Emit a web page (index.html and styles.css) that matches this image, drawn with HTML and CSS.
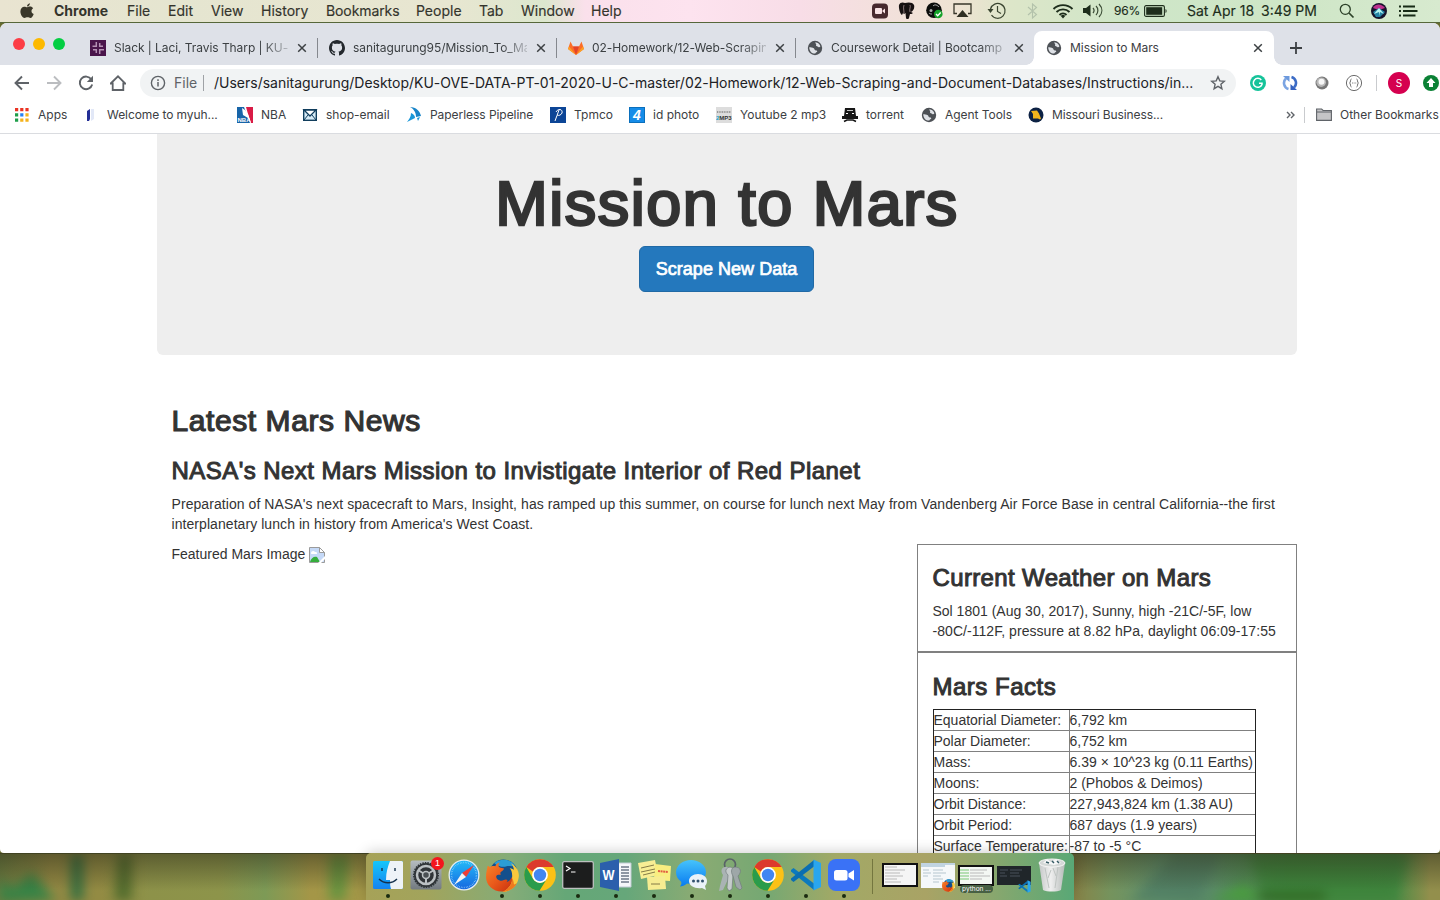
FILE: index.html
```html
<!DOCTYPE html>
<html lang="en">
<head>
<meta charset="utf-8">
<title>Mission to Mars</title>
<link rel="stylesheet" href="styles.css">
</head>
<body>
<svg class="defs" aria-hidden="true">
  <defs>
    <linearGradient id="gFinder" x1="0" y1="0" x2="0" y2="1"><stop offset="0" stop-color="#15c6fb"/><stop offset="1" stop-color="#1583ef"/></linearGradient>
    <linearGradient id="gSteel" x1="0" y1="0" x2="0" y2="1"><stop offset="0" stop-color="#b5bcc0"/><stop offset="1" stop-color="#737a80"/></linearGradient>
    <linearGradient id="gSafari" x1="0" y1="0" x2="0" y2="1"><stop offset="0" stop-color="#22b9f8"/><stop offset="1" stop-color="#1668e0"/></linearGradient>
    <linearGradient id="gFox" x1="0" y1="0" x2="1" y2="1"><stop offset="0" stop-color="#f5872a"/><stop offset=".5" stop-color="#ea5a1b"/><stop offset="1" stop-color="#c9300f"/></linearGradient>
    <linearGradient id="gMsg" x1="0" y1="0" x2="0" y2="1"><stop offset="0" stop-color="#46c3fb"/><stop offset="1" stop-color="#087bf1"/></linearGradient>
    <linearGradient id="gTrash" x1="0" y1="0" x2="1" y2="0"><stop offset="0" stop-color="#c5c8c8"/><stop offset=".45" stop-color="#efefef"/><stop offset="1" stop-color="#b7bcba"/></linearGradient>
  </defs>
  <symbol id="close" viewBox="0 0 10 10"><path d="M1.2 1.2l7.6 7.6M8.800 1.200L1.200 8.800" stroke="#3c4043" stroke-width="1.500" fill="none"/></symbol>
  <symbol id="globe" viewBox="0 0 16 16"><circle cx="8" cy="8" r="7.200" fill="#4d5156"/><path d="M8.500 2.200c2.400.2 4.300 1.900 4.900 4.100-.6 1.200-1.700 1.100-2.400.4-.6-.6-1.500-.3-1.900-1C8.700 5 9.600 4.500 9 3.800c-.4-.5-.9-.8-.5-1.600zM2.200 7.200c1.400.2 3.400.1 4.600 1.100.8.7.4 1.500 1.400 1.900 1 .3 2 .2 2.100 1.100-.4 1-1.500 1.200-2 2.300-3.200.3-6-2.400-6.100-6.400z" fill="#dee1e6"/></symbol>
  <symbol id="chrome" viewBox="0 0 32 32"><circle cx="16" cy="16" r="15.800" fill="#fbc116"/><path d="M2.300 8.100A15.800 15.800 0 0 1 29.700 8.100H16a8 8 0 0 0-7.200 4.500z" fill="#dc3a2d"/><path d="M2.300 8.100A15.800 15.800 0 0 0 15.500 31.800L22.800 20a8 8 0 0 1-13.700 0z" fill="#2a9c4b"/><circle cx="16" cy="16" r="7.900" fill="#fff"/><circle cx="16" cy="16" r="6.200" fill="#4286f1"/></symbol>
  <symbol id="firefox" viewBox="0 0 32 32"><circle cx="17" cy="14" r="13.500" fill="#134f8c"/><path d="M8 4c6-5 16-4 20 2-3 2-5 0-8 1s-7 1-12-3z" fill="#2b9dd6"/><path d="M24 4c6 3 9 9 7.500 15C30 27 23 32 16 32c2-2 8-5 9-12 1-5 0-9-2-11 2 0 4 1 4 2 0-3-1-5-3-7z" fill="#fbc93c"/><path d="M1.500 7c1-.500 1.500.5 2 1C5 7 7 6.500 9 7c1-2 2-3 4.500-3.500C12 5 11.500 7 13 8c1 1 4 .5 4.500 1.500-.5 2-3 2.500-3.500 3.500-.3 1.500.5 2 0 2.500-1-.500-3.500-.5-4 1-.500 2 1 4 4 4.500 3 .4 4-1.500 6-1 1.500.5 1 1.500 0 2 2 0 4-2 5-4.500C26 23 23 28 17 31.500 8 32.500 0 26 0 17.500 0 13 1 10 1.500 7z" fill="url(#gFox)"/><path d="M25 18c1 6-3 11-9 14 7-.5 12-4 14-9-2 2-3 2-3 1 0-2-1-4-2-6z" fill="#ee7a1e"/></symbol>
  <symbol id="vscode" viewBox="0 0 32 32"><path d="M1 11l2.500-2L24 24.500V31L1 12.500z" fill="#0c79bd"/><path d="M1 21l2.500 2L24 7.500V1L1 19.500z" fill="#0b6eb1"/><path d="M23.500.5L31 4v24l-7.500 3.500z" fill="#2aa6ee"/></symbol>
</svg>

<header class="menubar">
  <svg class="apple" width="14" height="16" viewBox="0 0 14 16"><path d="M9.900.2c.1 1.500-1.300 3.300-2.900 3.300C6.800 2 8.300.4 9.900.2zM7.200 4.300c.7 0 1.600-.7 3-.7 1.100 0 2.200.6 2.900 1.600-2.400 1.500-2 4.800.6 5.800-.7 1.900-1.900 4-3.300 4-1.100 0-1.500-.7-2.900-.7s-1.900.7-2.900.7C2.600 15 .4 11.500.4 8.500c0-3.100 2-4.800 3.900-4.800 1.200 0 2.200.6 2.900.6z" fill="#39372a"/></svg>
  <span class="m-chrome">Chrome</span><span class="m-file">File</span><span class="m-edit">Edit</span><span class="m-view">View</span><span class="m-history">History</span><span class="m-book">Bookmarks</span><span class="m-people">People</span><span class="m-tab">Tab</span><span class="m-window">Window</span><span class="m-help">Help</span>
  <div class="status">
    <svg class="s-zoom" width="16" height="16" viewBox="0 0 16 16"><rect width="16" height="15" y=".5" rx="4" fill="#47292e"/><rect x="3" y="5" width="7" height="6" rx="1" fill="#f8e2e4"/><path d="M10.500 7.500L13 5.500v5l-2.500-2z" fill="#f8e2e4"/></svg>
    <svg class="s-pg" width="17" height="17" viewBox="0 0 17 17"><path d="M1 3C2 0 5 0 7 1c3-1 8-1 9 2s-1 6-3 7l2 1c-1 1-2 1-3 1l-1 4c-1 2-3 1-3 0l-.500-5-1.500 1-1-1-1 2C2 12 .5 6 1 3z" fill="#171112"/><path d="M6 3c-1 3 0 5 0 8M12 3c1 2-1 4 0 7" stroke="#b79fa1" stroke-width=".7" fill="none"/></svg>
    <svg class="s-web" width="17" height="17" viewBox="0 0 17 17"><circle cx="8" cy="8.300" r="7.800" fill="#0c0e0c"/><path d="M7 4c2-2 4-1 6 1M3 11c1 1 2 1 3 1" stroke="#ddd" stroke-width=".8" fill="none"/><circle cx="5" cy="8.500" r="1.500" fill="#aaa"/><circle cx="12.300" cy="12" r="4.300" fill="#16a32a"/><path d="M10 12l1.700 1.700 3-3.200" stroke="#fff" stroke-width="1.300" fill="none"/></svg>
    <svg class="s-air" width="19" height="15" viewBox="0 0 19 15"><path d="M4 10.500H1V1h17v9.500h-3" stroke="#39372a" stroke-width="1.300" fill="none"/><path d="M9.500 7l6 7h-12z" fill="#302f22"/></svg>
    <svg class="s-time" width="20" height="18" viewBox="0 0 20 18"><path d="M3.500 7A7.400 7.400 0 1 1 4.500 13M10.500 4v5.500l3.500 2" stroke="#39442f" stroke-width="1.200" fill="none"/><path d="M.5 7h6L3.500 11z" fill="#39442f"/></svg>
    <svg class="s-bt" width="11" height="16" viewBox="0 0 11 16"><path d="M1 4l8.500 7.500L5.500 15V1l4 3.500L1 12" stroke="#b3c2ab" stroke-width="1.100" fill="none"/></svg>
    <svg class="s-wifi" width="22" height="16" viewBox="0 0 22 16"><path d="M1.500 6a13.500 13.500 0 0 1 19 0M4.500 9a9.300 9.300 0 0 1 13 0M7.500 12a5 5 0 0 1 7 0" stroke="#1d2d1b" stroke-width="1.900" fill="none"/><path d="M8.800 13a3 3 0 0 1 4.400 0L11 15.500z" fill="#1d2d1b"/></svg>
    <svg class="s-vol" width="22" height="15" viewBox="0 0 22 15"><path d="M1 5h3L8.500 1.500v12L4 10H1z" fill="#1d2d1b"/><path d="M11 5c1.300 1.500 1.300 3.500 0 5M14 3c2.500 2.500 2.500 6.500 0 9M17 1c3.800 4 3.800 9 0 13" stroke="#3a4b35" stroke-width="1.200" fill="none"/></svg>
    <span class="s-pct">96%</span>
    <svg class="s-bat" width="24" height="12" viewBox="0 0 24 12"><rect x=".6" y=".6" width="19.800" height="10.800" rx="1.500" stroke="#1d2d1b" stroke-width="1.100" fill="none"/><rect x="2.200" y="2.200" width="16" height="7.600" fill="#1d2d1b"/><path d="M21.500 4c1.500.5 1.500 3.500 0 4z" fill="#1d2d1b"/></svg>
    <span class="s-date">Sat Apr 18</span><span class="s-clock">3:49 PM</span>
    <svg class="s-search" width="16" height="16" viewBox="0 0 16 16"><circle cx="6.300" cy="6.300" r="5" stroke="#2d4129" stroke-width="1.300" fill="none"/><path d="M10 10l4.500 4.500" stroke="#2d4129" stroke-width="1.700"/></svg>
    <svg class="s-siri" width="16" height="16" viewBox="0 0 16 16"><circle cx="8" cy="8" r="8" fill="#15122b"/><path d="M2 5c3-5 9-4 12 0L8 7z" fill="#bd318e"/><path d="M2 9l6-4 6 4-5 5H5z" fill="#2583a5"/><path d="M3 11l5-6 5 6-4-2v4l-1-4z" fill="#b8f6f0"/></svg>
    <svg class="s-list" width="19" height="12" viewBox="0 0 19 12"><path d="M0 1.500h2M4 1.500h12M0 6h2M4 6h14.500M0 10.500h2M4 10.500h12.500" stroke="#172b16" stroke-width="1.800"/></svg>
  </div>
</header>

<div class="window">
  <div class="tabs">
    <div class="lights"><i class="red"></i><i class="amber"></i><i class="green"></i></div>
    <div class="tab t1">
      <svg width="16" height="16" viewBox="0 0 16 16"><rect width="16" height="16" fill="#4a154b"/><path d="M6.300 2v5M9.700 3v4M6.300 9v4M9.700 9v5M2.500 6.300H7M9 6.300h4M3 9.700h4M9 9.700h5" stroke="#b591b4" stroke-width="1.500"/></svg>
      <span class="tt">Slack | Laci, Travis Tharp | KU-</span><svg class="x" width="10" height="10"><use href="#close"/></svg>
    </div>
    <div class="tab t2">
      <svg width="16" height="16" viewBox="0 0 16 16"><path fill="#24292e" d="M8 0C3.600 0 0 3.600 0 8c0 3.500 2.300 6.500 5.500 7.600.4.100.5-.2.500-.4v-1.500c-2.200.5-2.700-.9-2.700-.9-.4-.9-.9-1.200-.9-1.200-.7-.5.100-.5.100-.5.800.1 1.200.8 1.200.8.700 1.200 1.900.9 2.300.7.100-.5.300-.9.500-1.100-1.800-.2-3.600-.9-3.600-4 0-.9.300-1.600.8-2.200-.1-.2-.4-1 .1-2.100 0 0 .7-.2 2.200.8 1.300-.4 2.700-.4 4 0 1.500-1 2.200-.8 2.200-.8.400 1.100.2 1.900.1 2.100.5.600.8 1.300.8 2.200 0 3.100-1.900 3.800-3.700 4 .3.300.6.800.6 1.500v2.200c0 .2.100.5.500.4C13.700 14.500 16 11.500 16 8c0-4.400-3.600-8-8-8z"/></svg>
      <span class="tt">sanitagurung95/Mission_To_Ma</span><svg class="x" width="10" height="10"><use href="#close"/></svg>
    </div>
    <div class="tab t3">
      <svg width="16" height="16" viewBox="0 0 16 16"><path d="M8 15L0 9l2.500-7.500L5 6.500h6l2.500-5L16 9z" fill="#fc6d26"/><path d="M8 15L5 6.500h6z" fill="#e24329"/><path d="M8 15L0 9l1-2.500zM8 15l8-6-1-2.500z" fill="#fca326"/></svg>
      <span class="tt">02-Homework/12-Web-Scrapin</span><svg class="x" width="10" height="10"><use href="#close"/></svg>
    </div>
    <div class="tab t4">
      <svg width="16" height="16"><use href="#globe"/></svg>
      <span class="tt">Coursework Detail | Bootcamp</span><svg class="x" width="10" height="10"><use href="#close"/></svg>
    </div>
    <div class="tab t5 active">
      <svg width="16" height="16"><use href="#globe"/></svg>
      <span class="tt">Mission to Mars</span><svg class="x" width="10" height="10"><use href="#close"/></svg>
    </div>
    <svg class="plus" width="12" height="12" viewBox="0 0 12 12"><path d="M6 0v12M0 6h12" stroke="#3c4043" stroke-width="1.800"/></svg>
  </div>

  <div class="toolbar">
    <svg class="nav" width="16" height="16" viewBox="0 0 16 16"><path d="M15 8H2M8 1.500L1.500 8 8 14.500" stroke="#5f6368" stroke-width="1.900" fill="none"/></svg>
    <svg class="nav" width="16" height="16" viewBox="0 0 16 16"><path d="M1 8h13M8 1.500L14.500 8 8 14.500" stroke="#bbbdc0" stroke-width="1.900" fill="none"/></svg>
    <svg class="nav" width="16" height="16" viewBox="0 0 16 16"><path d="M13.300 4.300A6.300 6.300 0 1 0 14.200 9.500" stroke="#5f6368" stroke-width="1.900" fill="none"/><path d="M15 .8V7H8.800z" fill="#5f6368"/></svg>
    <svg class="nav" width="16" height="16" viewBox="0 0 16 16"><path d="M.7 8.500L8 1.300l7.300 7.200h-2V15H2.700V8.500z" stroke="#5f6368" stroke-width="1.800" fill="none"/></svg>
    <div class="omnibox">
      <svg class="info" width="16" height="16" viewBox="0 0 16 16"><circle cx="8" cy="8" r="6.600" stroke="#5f6368" stroke-width="1.400" fill="none"/><path d="M8 7v4.500M8 4.300V6" stroke="#5f6368" stroke-width="1.500"/></svg>
      <span class="scheme">File</span>
      <span class="url">/Users/sanitagurung/Desktop/KU-OVE-DATA-PT-01-2020-U-C-master/02-Homework/12-Web-Scraping-and-Document-Databases/Instructions/in...</span>
      <svg class="star" width="16" height="16" viewBox="0 0 16 16"><path d="M8 1.700l1.800 4.200 4.500.4-3.400 3 1 4.400L8 11.400l-3.900 2.300 1-4.400-3.400-3 4.500-.4z" stroke="#5f6368" stroke-width="1.400" fill="none"/></svg>
    </div>
    <svg class="ext e1" width="16" height="16" viewBox="0 0 16 16"><circle cx="8" cy="8" r="8" fill="#15c39a"/><path d="M11.300 5A4.500 4.500 0 1 0 12 9.500V8.300H9" stroke="#fff" stroke-width="1.500" fill="none"/></svg>
    <svg class="ext e2" width="16" height="16" viewBox="0 0 16 16"><path d="M6.500 14A6.200 6.200 0 0 1 4 3.500" stroke="#7ba4e2" stroke-width="2.600" fill="none"/><path d="M9.500 2a6.200 6.200 0 0 1 2.500 10.500" stroke="#3c6cc6" stroke-width="2.600" fill="none"/><path d="M1 1h6.500v6z" fill="#6c99dd"/><path d="M15 15H8.500V9z" fill="#3562c0"/></svg>
    <svg class="ext e3" width="14" height="14" viewBox="0 0 14 14"><circle cx="7" cy="7" r="6.500" fill="#777"/><circle cx="6.200" cy="6.200" r="4.800" fill="#b8b8b8"/><circle cx="6.500" cy="5.800" r="3" fill="#f7f7f7"/></svg>
    <svg class="ext e4" width="18" height="18" viewBox="0 0 18 18"><circle cx="9" cy="9" r="7.600" stroke="#6d6d6d" fill="none"/><path d="M6.500 5C5 5 6 8.500 4.500 9 6 9.500 5 13 6.500 13M11.500 5c1.500 0 .5 3.500 2 4-1.500.5-.5 4-2 4M7 9h.8M8.700 9h.8M10.400 9h.8" stroke="#6d6d6d" fill="none"/></svg>
    <i class="sep"></i>
    <span class="avatar">S</span>
    <svg class="ext e5" width="16" height="16" viewBox="0 0 16 16"><circle cx="8" cy="8" r="8" fill="#0b8135"/><path d="M8 3l4.500 5H10v4H6V8H3.500z" fill="#fff"/></svg>
  </div>

  <div class="bookmarks">
    <svg class="apps" width="14" height="14" viewBox="0 0 14 14"><path d="M0 1.700h3.200M5.200 1.700h3.200M10.400 1.700h3.200" stroke="#ea3323" stroke-width="3.200"/><path d="M0 6.900h3.200M0 12.100h3.200" stroke="#1e9e4a" stroke-width="3.200"/><path d="M5.200 6.900h3.200" stroke="#2681f2" stroke-width="3.200"/><path d="M10.400 6.900h3.200M5.200 12.100h3.200M10.400 12.100h3.200" stroke="#f5b21b" stroke-width="3.200"/></svg><span class="b1">Apps</span>
    <svg class="bi" width="16" height="16" viewBox="0 0 16 16"><path d="M6 2v10l-1 2H3V4z" fill="#232e96"/><path d="M7 2h3v10l-3 2z" fill="#e2e8f7"/></svg><span class="b2">Welcome to myuh...</span>
    <svg class="bi" width="16" height="16" viewBox="0 0 16 16"><path d="M0 0h7l6 16H0z" fill="#1764a8"/><path d="M9 0h7v16h-2L11 7z" fill="#d91b46"/><path d="M5 1l3 2 3 4 3 9-3-5-5-3z" fill="#fff"/><text x=".5" y="14.500" class="nba">NBA</text></svg><span class="b3">NBA</span>
    <svg class="bi" width="16" height="16" viewBox="0 0 16 16"><rect x="1.700" y="2.700" width="12.600" height="10.600" fill="#d7ebf6" stroke="#113e5d" stroke-width="1.400"/><path d="M2 3l6 6 6-6z" fill="#fff" stroke="#113e5d" stroke-width="1.300"/><path d="M2 13l4-5M14 13l-4-5" stroke="#113e5d"/></svg><span class="b4">shop-email</span>
    <svg class="bi" width="16" height="16" viewBox="0 0 16 16"><path d="M4 0c6 0 10 4 11 9l-5 1C10 6 8 2 4 0z" fill="#1985c8"/><path d="M5 6c3 1 4 3 4 5l-8 4c2-3 4-5 4-9zM11 11l3-1-2 4z" fill="#1997d8"/></svg><span class="b5">Paperless Pipeline</span>
    <svg class="bi" width="16" height="16" viewBox="0 0 16 16"><rect width="16" height="16" fill="#0c4596"/><path d="M5 14C6 10 8 7 9 3M6 5c2-4 7-3 6 1-1 2-3 3-5 2" stroke="#fff" fill="none"/></svg><span class="b6">Tpmco</span>
    <svg class="bi" width="16" height="16" viewBox="0 0 16 16"><rect x=".5" y=".5" width="15" height="15" fill="#158ce8" stroke="#0a6fbc"/><text x="4" y="13" class="four">4</text></svg><span class="b7">id photo</span>
    <svg class="bi" width="16" height="16" viewBox="0 0 16 16"><rect width="16" height="16" fill="#ddd"/><path d="M1 5h14" stroke="#999" stroke-width="2" stroke-dasharray="1 .7"/><text x="0" y="12.500" class="mp3"><tspan class="two">2</tspan>MP3</text></svg><span class="b8">Youtube 2 mp3</span>
    <svg class="bi" width="16" height="16" viewBox="0 0 16 16"><path d="M3 1h10l1 8H2zM0 9h16v3H0z" fill="#171717"/><path d="M4 6h2v1H4zM10 6h2v1h-2zM5 3h6v.7H5z" fill="#fff"/><path d="M2 14.500l3-1.500h6l3 1.500" stroke="#171717" stroke-width="1.600" fill="none"/></svg><span class="b9">torrent</span>
    <svg class="bi" width="16" height="16"><use href="#globe"/></svg><span class="b10">Agent Tools</span>
    <svg class="bi" width="16" height="16" viewBox="0 0 16 16"><circle cx="8" cy="8" r="7.500" fill="#0d2244"/><path d="M3 4l6-.5 2 3 2 5-1 1-2-1H5V7z" fill="#f2b51d"/></svg><span class="b11">Missouri Business...</span>
    <svg class="more" width="9" height="8" viewBox="0 0 9 8"><path d="M1 1l3 3-3 3M5 1l3 3-3 3" stroke="#5f6368" stroke-width="1.400" fill="none"/></svg>
    <i class="sep2"></i>
    <svg class="folder" width="16" height="13" viewBox="0 0 16 13"><path d="M.6 12.400V1h5l1.500 1.500h8.300v9.900z" fill="#c5c5c7" stroke="#5f6368" stroke-width="1.100"/><path d="M1 4h14" stroke="#5f6368"/></svg><span class="b12">Other Bookmarks</span>
  </div>

  <main class="page">
    <div class="container">
      <section class="jumbotron">
        <h1>Mission to Mars</h1>
        <button class="scrape">Scrape New Data</button>
      </section>
      <section class="news">
        <h2>Latest Mars News</h2>
        <h3 class="headline">NASA's Next Mars Mission to Invistigate Interior of Red Planet</h3>
        <p><span class="l1">Preparation of NASA's next spacecraft to Mars, Insight, has ramped up this summer, on course for lunch next May from Vandenberg Air Force Base in central California--the first</span><br><span class="l2">interplanetary lunch in history from America's West Coast.</span></p>
      </section>
      <div class="row">
        <div class="featured"><span>Featured Mars Image</span>
          <svg width="16" height="16" viewBox="0 0 16 16"><path d="M.5.500h10l5 5v10H.5z" fill="#c5d9f7" stroke="#9b9b9b"/><path d="M2 6c0-2 3-3 4-1 2-.5 3 2 1 2H3c-1 0-1-.5-1-1z" fill="#fff"/><path d="M1 15c1-4 4-6 7-5l3 5z" fill="#35ad3d"/><path d="M16 9v3l-4 4H9z" fill="#fff"/><path d="M10.500.5v5h5z" fill="#fff" stroke="#9b9b9b"/></svg>
        </div>
        <div class="side">
          <section class="box">
            <h3 class="weather">Current Weather on Mars</h3>
            <p><span class="l3">Sol 1801 (Aug 30, 2017), Sunny, high -21C/-5F, low</span><br><span class="l4">-80C/-112F, pressure at 8.82 hPa, daylight 06:09-17:55</span></p>
          </section>
          <section class="box">
            <h3 class="facts">Mars Facts</h3>
            <table>
              <tr><td>Equatorial Diameter:</td><td>6,792 km</td></tr>
              <tr><td>Polar Diameter:</td><td>6,752 km</td></tr>
              <tr><td>Mass:</td><td>6.39 × 10^23 kg (0.11 Earths)</td></tr>
              <tr><td>Moons:</td><td>2 (Phobos &amp; Deimos)</td></tr>
              <tr><td>Orbit Distance:</td><td>227,943,824 km (1.38 AU)</td></tr>
              <tr><td>Orbit Period:</td><td>687 days (1.9 years)</td></tr>
              <tr><td>Surface Temperature:</td><td>-87 to -5 °C</td></tr>
            </table>
          </section>
        </div>
      </div>
    </div>
  </main>
</div>

<footer class="desktop">
  <div class="wallpaper">
    <svg width="1440" height="47" viewBox="0 0 1440 47" preserveAspectRatio="none"><path d="M0 47V25l12 10 20-17 24 29z" fill="#238246"/><path d="M71 0h12v47H71z" fill="#17663f"/><path d="M118 0h14v47h-18z" fill="#426327"/><path d="M329 0h21l-5 47h-16z" fill="#58923d"/><path d="M1175 0h45l-20 47h-70z" fill="#4f7c62"/><path d="M1250 0h160l-15 47H1265z" fill="#3b833a"/><path d="M1210 47l35-18 15 18z" fill="#47a038"/><path d="M1255 38h70v12h-60z" fill="#285b18"/></svg>
  </div>
  <div class="dock">
    <div class="app run"><svg width="30" height="30" viewBox="0 0 30 30"><rect width="30" height="28" y="1" rx="1.500" fill="url(#gFinder)"/><path d="M17 1h11.500q1.500 0 1.500 1.500v25q0 1.500-1.500 1.500H18c-1-3-1-6-1-9h-4C13 12 15 6 17 1z" fill="#eef3f8"/><path d="M9 8v3M22 8v3M6 19c5 5 13 5 18 0" stroke="#15304b" stroke-width="1.400" fill="none"/></svg></div>
    <div class="app"><svg width="32" height="32" viewBox="0 0 32 32"><rect x=".5" y="1.500" width="31" height="29" rx="2" fill="url(#gSteel)"/><circle cx="16" cy="16" r="12" fill="#303438" stroke="#30363a" stroke-width="2" stroke-dasharray="1.500 1"/><circle cx="16" cy="16" r="9" fill="none" stroke="#bbc0c3" stroke-width="2.500"/><path d="M16 16L8 11M16 16l8-5M16 16v9" stroke="#bbc0c3" stroke-width="2"/><circle cx="16" cy="16" r="3.500" fill="#4a4f53" stroke="#bbc0c3" stroke-width="1.500"/></svg><b class="badge">1</b></div>
    <div class="app"><svg width="32" height="32" viewBox="0 0 32 32"><circle cx="16" cy="16" r="15.500" fill="#e4edf1"/><circle cx="16" cy="16" r="14.200" fill="url(#gSafari)"/><circle cx="16" cy="16" r="12.500" fill="none" stroke="#a5dcfa" stroke-width="1.500" stroke-dasharray=".5 1.200"/><path d="M26 6L18 18l-4-4z" fill="#ee3e37"/><path d="M6 26l8-12 4 4z" fill="#f4f4f4"/></svg></div>
    <div class="app run"><svg width="33" height="33"><use href="#firefox"/></svg></div>
    <div class="app run"><svg width="32" height="32"><use href="#chrome"/></svg></div>
    <div class="app run"><svg width="32" height="28" viewBox="0 0 32 28"><rect x=".7" y=".7" width="30.600" height="26.600" rx="1.500" fill="#1c1d1d" stroke="#bcc0bf" stroke-width="1.300"/><path d="M4 5l4 2.500L4 10M9 11h4.500" stroke="#fff" stroke-width="1.200" fill="none"/></svg></div>
    <div class="app run"><svg width="32" height="32" viewBox="0 0 32 32"><path d="M17 4h14v24H17z" fill="#f6f7fa" stroke="#c1cbd4"/><path d="M21 8h8M21 11h8M21 14h8M21 17h8M21 20h8M21 23h8" stroke="#29394f" stroke-width="1.200"/><path d="M0 4l19-4v32L0 28z" fill="#2b5fac"/><text x="2.500" y="21" class="word" textLength="12" lengthAdjust="spacingAndGlyphs">W</text></svg></div>
    <div class="app run"><svg width="35" height="32" viewBox="0 0 35 32"><path d="M1 4l17-3 3 15-17 4z" fill="#f7ee94"/><path d="M18 5l16 2-1 15-16-1z" fill="#f8ee80"/><path d="M10 18l18-1 1 13-18 1z" fill="#f6ec91"/><path d="M4 9l13-3M4 13l14-3M6 16l12-3M14 25h9" stroke="#776e3e" stroke-width=".9"/><path d="M21 12l10 1" stroke="#e15c42" stroke-width="2" stroke-dasharray="2 .6"/></svg></div>
    <div class="app run"><svg width="32" height="32" viewBox="0 0 32 32"><path d="M15 1c8 0 15 5 15 12s-7 12-15 12l-4-.500c-2 2-5 3-7 3 1-1.500 2-3 1-5-3-2-5-5-5-9C0 6 7 1 15 1z" fill="url(#gMsg)"/><path d="M22 15c5 0 9 3 9 7 0 2-1 4-2 5l1 4-4-2c-7 1-13-2-13-7 0-4 4-7 9-7z" fill="#eaf2f8"/><circle cx="17.500" cy="22" r="1.500" fill="#31516e"/><circle cx="22" cy="22" r="1.500" fill="#31516e"/><circle cx="26.500" cy="22" r="1.500" fill="#31516e"/></svg></div>
    <div class="app run"><svg width="28" height="34" viewBox="0 0 28 34"><circle cx="14" cy="6.500" r="5.500" fill="none" stroke="#596267" stroke-width="1.700"/><path d="M9 9c5-1 8 4 5 8l-7 15-4 1 1-5 3-11c-3-4-1-8 2-8z" fill="#aab3b4"/><path d="M14 9c5 1 5 5 3 8l-1 14-3 2-2-3 1-13c-4-4-2-7 2-8z" fill="#c5cbcb" stroke="#737d7e" stroke-width=".7"/><path d="M19 9c6 0 7 5 3 9l4 12-2 2-4-3-3-11c-3-5-1-9 2-9z" fill="#9ea7a8" stroke="#737d7e" stroke-width=".7"/></svg></div>
    <div class="app run"><svg width="32" height="32"><use href="#chrome"/></svg></div>
    <div class="app run"><svg width="32" height="32"><use href="#vscode"/></svg></div>
    <div class="app run"><svg width="32" height="32" viewBox="0 0 32 32"><rect width="32" height="32" rx="8" fill="#3a72f6"/><rect x="6" y="11" width="13.500" height="10.500" rx="2.500" fill="#fff"/><path d="M20.500 14.500L26 11v10.500L20.500 18z" fill="#fff"/></svg></div>
    <i class="rule"></i>
    <div class="app"><svg width="36" height="24" viewBox="0 0 36 24"><rect x="1" y="1" width="34" height="22" fill="#f5f5f5" stroke="#111" stroke-width="2"/><path d="M3 4h12M3 7h20M3 10h15M3 13h18M3 16h12M3 19h16" stroke="#aaa" stroke-width=".8"/></svg></div>
    <div class="app"><svg width="34" height="25" viewBox="0 0 34 25"><rect width="34" height="25" fill="#f5f8fa"/><path d="M0 1h34M0 3h24" stroke="#8cb0c9"/><path d="M2 7h6M2 10h8M2 13h5M12 7h10M12 10h13M12 13h8M12 16h10M12 19h6" stroke="#b6c6cf"/></svg><svg class="mini" width="13" height="13"><use href="#firefox"/></svg></div>
    <div class="app"><svg width="36" height="21" viewBox="0 0 36 21"><rect x="1" y="1" width="34" height="19" fill="#f3f7f3" stroke="#111" stroke-width="2"/><path d="M2 5h9M2 8h9M2 11h9M2 14h9" stroke="#b6dfb4" stroke-width="2"/><path d="M12 5h17M12 8h14M12 11h20M12 14h12" stroke="#aaa" stroke-width=".8"/></svg><span class="tip">python ...</span></div>
    <div class="app"><svg width="34" height="19" viewBox="0 0 34 19"><rect width="34" height="19" fill="#20262a"/><path d="M3 4h8M3 7h5M13 4h12M13 7h9M13 10h10M3 10h7" stroke="#49515a"/></svg><svg class="mini code" width="13" height="13"><use href="#vscode"/></svg></div>
    <div class="app"><svg width="28" height="34" viewBox="0 0 28 34"><path d="M1 5h26l-4 27c-4 2-14 2-18 0z" fill="url(#gTrash)"/><ellipse cx="14" cy="5" rx="13" ry="4" fill="#d4d8d7" stroke="#f5f5f5"/><path d="M5 5l4-4 4 3 5-3 5 4-7 2z" fill="#f8f8f8"/><path d="M8 4l3 1M14 3l2 2M19 3l2 2" stroke="#355b65" stroke-width="1.500"/><path d="M7 10l4 20M13 12l-3 8M20 9l-3 21M15 10l3 8" stroke="#bfc4c2"/></svg></div>
  </div>
</footer>
</body>
</html>
```

FILE: styles.css
```css
* { box-sizing: border-box; }
body { margin: 0; width: 1440px; height: 900px; overflow: hidden; display: flex; flex-direction: column; font-family: "Liberation Sans", Arial, sans-serif; background: #666a2f; }
svg, i { display: block; flex: none; }
.defs { position: absolute; width: 0; height: 0; }

/* system menu bar */
.menubar { flex: none; height: 23px; display: flex; align-items: center; padding: 0 0 1px 20px; border-bottom: 1px solid #56673a; background: linear-gradient(90deg, #e9e4d1 0, #e5e5d0 170px, #e8e6d1 450px, #dce7ce 545px, #fae0eb 585px, #fde3ef 690px, #f8dde7 800px, #eee3d2 960px, #dde6c9 1010px, #cee6c8 1130px, #cfe6c7 1300px, #d7eacf 1440px); font: 400 14px/22px Inter, sans-serif; color: #34342c; white-space: nowrap; }
.menubar span { flex: none; -webkit-text-stroke: .15px currentColor; }
.menubar .apple { margin-right: 20px; }
.menubar .m-chrome { width: 73px; font-weight: 700; -webkit-text-stroke: 0; }
.m-file { width: 41px; }
.m-edit { width: 43px; }
.m-view { width: 50px; }
.m-history { width: 65px; }
.m-book { width: 90px; letter-spacing: -.1px; }
.m-people { width: 63px; }
.m-tab { width: 42px; }
.m-window { width: 70px; }
.m-help { width: 281px; }
.status { display: flex; align-items: center; color: #1d2d1b; }
.s-zoom { margin-right: 10px; }
.s-pg { margin-right: 11px; }
.s-web { margin-right: 10px; }
.s-air { margin-right: 15px; }
.s-time { margin-right: 20px; }
.s-bt { margin-right: 14px; }
.s-wifi { margin-right: 8px; }
.s-vol { margin-right: 10px; }
.menubar .s-pct { width: 30px; font-size: 12px; letter-spacing: -.2px; }
.s-bat { margin-right: 19px; }
.s-date { width: 74px; }
.s-clock { width: 78px; }
.s-search { margin-right: 16px; }
.s-siri { margin-right: 12px; }

/* browser window */
.window { flex: none; height: 830px; border-radius: 7px 7px 4px 4px; overflow: hidden; background: #fff; display: flex; flex-direction: column; font-family: Inter, sans-serif; }
.tabs { height: 42px; flex: none; display: flex; align-items: center; background: #dee1e8; padding-left: 13px; }
.lights { display: flex; gap: 8px; width: 77px; align-self: flex-start; padding-top: 15px; }
.lights i { width: 12px; height: 12px; border-radius: 50%; }
.red { background: #fc3d46; }
.amber { background: #fdb900; }
.green { background: #04ce42; }
.tab { display: flex; align-items: center; height: 34px; margin-top: 8px; font: 400 12px/18px Inter, sans-serif; color: #3c4043; }
.tab > svg:first-child { margin-right: 8px; }
.tab .tt { white-space: nowrap; width: 174px; margin-right: 9px; letter-spacing: -.06px; }
.tab:not(.active) .tt { -webkit-mask-image: linear-gradient(90deg, #000 148px, transparent 182px); }
.t1::after, .t2::after, .t3::after { content: ""; height: 20px; width: 1px; background: #85888e; margin-left: 10px; }
.t1, .t2, .t3 { width: 228px; margin-right: 11px; }
.t4 { width: 227px; }
.t5 { width: 240px; background: #fff; border-radius: 8px 8px 0 0; padding-left: 12px; position: relative; }
.t5::before, .t5::after { content: ""; position: absolute; bottom: 0; width: 8px; height: 8px; }
.t5::before { left: -8px; background: radial-gradient(circle at 0 0, #dee1e8 7.500px, #fff 8px); }
.t5::after { right: -8px; background: radial-gradient(circle at 100% 0, #dee1e8 7.500px, #fff 8px); }
.t5 .tt { width: 183px; margin-right: 0; }
.plus { margin: 8px 0 0 16px; }

.toolbar { height: 36px; flex: none; display: flex; align-items: center; padding-left: 14px; }
.nav { margin-right: 16px; }
.nav:nth-child(4) { margin-right: 14px; }
.omnibox { width: 1096px; height: 28px; border-radius: 14px; background: #f1f3f4; display: flex; align-items: center; padding-left: 10px; font: 400 14px/20px Inter, sans-serif; color: #202124; white-space: nowrap; margin-right: 14px; }
.info { margin-right: 8px; }
.scheme { width: 30px; height: 16px; line-height: 16px; color: #5f6368; border-right: 1px solid #9fa2a6; margin-right: 10px; }
.url { width: 996px; letter-spacing: -.008px; }
.e1 { margin-right: 16px; }
.e2 { margin-right: 17px; }
.e3 { margin-right: 16px; }
.e4 { margin-right: 13px; }
.sep { width: 1px; height: 16px; background: #c9cbce; margin-right: 11px; }
.avatar { flex: none; width: 22px; height: 22px; border-radius: 50%; background: #d5004f; color: #fff; font-size: 10px; line-height: 22px; text-align: center; margin-right: 13px; }

.bookmarks { height: 33px; flex: none; border-bottom: 1px solid #dadce0; display: flex; align-items: center; padding: 0 0 5px 15px; font: 400 12px/16px Inter, sans-serif; color: #3c4043; white-space: nowrap; }
.bookmarks span { flex: none; }
.bi { margin-right: 8px; }
.apps { margin-right: 9px; }
.b1 { width: 46px; }
.b2 { width: 130px; margin-left: -1px; letter-spacing: -.08px; }
.b3 { width: 41px; }
.b4 { width: 80px; }
.b5 { width: 120px; letter-spacing: -.05px; }
.b6 { width: 55px; }
.b7 { width: 63px; }
.b8 { width: 102px; }
.b9 { width: 55px; }
.b10 { width: 83px; letter-spacing: -.04px; }
.b11 { width: 234px; letter-spacing: -.1px; }
.more { margin-right: 9px; }
.sep2 { width: 1px; height: 16px; background: #c9cbce; margin-right: 11px; }
.folder { margin-right: 8px; }
.nba { font: bold 6px "Liberation Sans", sans-serif; fill: #fff; }
.four { font: italic bold 14px "Liberation Sans", sans-serif; fill: #fff; }
.mp3 { font: bold 6px "Liberation Sans", sans-serif; fill: #333; }
.two { fill: #22a0c8; }

/* Mars page */
.page { flex: 1; min-height: 0; overflow: hidden; font: 400 14px/20px "Liberation Sans", Arial, sans-serif; color: #333; }
.container { width: 1140px; margin-left: 157px; }
h1, h2, h3, p { margin: 0; white-space: nowrap; font-weight: 400; }
.jumbotron { height: 221px; background: #eee; border-radius: 0 0 6px 6px; display: flex; flex-direction: column; align-items: center; padding-top: 35px; }
h1 { font-size: 63px; line-height: 69px; height: 77px; -webkit-text-stroke: 2.600px #333; letter-spacing: 1.500px; }
.scrape { width: 175px; height: 46px; margin-right: 1px; padding: 0; border: 1px solid #2069a5; border-radius: 6px; background: #2478bd; color: #fff; font: 400 18px/24px "Liberation Sans", Arial, sans-serif; -webkit-text-stroke: .7px #fff; letter-spacing: .04px; }
.news { padding: 49px 14.500px 0; }
h2 { font-size: 30px; line-height: 33px; -webkit-text-stroke: 1.200px #333; letter-spacing: .58px; }
h3 { font-size: 24px; line-height: 26px; -webkit-text-stroke: 1px #333; }
.headline { margin: 21px 0 10px; letter-spacing: .45px; }
.l1 { letter-spacing: .066px; }
.l2 { letter-spacing: .065px; }
.l4 { letter-spacing: .05px; }
.row { display: flex; justify-content: space-between; padding: 10px 0 0 14.500px; }
.featured { display: flex; gap: 4px; }
.featured svg { margin-top: 3px; }
.side { width: 380px; }
.box { border: 1px solid #808080; height: 108px; padding: 20px 15px 0 14.500px; }
.box + .box { height: 300px; padding-top: 21px; }
.box h3 { margin-bottom: 10px; }
.weather { letter-spacing: .36px; }
.facts { letter-spacing: .5px; }
table { border-collapse: collapse; outline: 1px solid #222; outline-offset: -1px; width: 323px; margin: -1px 0 0 .5px; white-space: nowrap; table-layout: fixed; }
td { padding: 0; border: 1px solid #808080; height: 21px; line-height: 20px; text-indent: -.5px; }
td:first-child { width: 136px; }

/* desktop and dock */
.desktop { position: relative; flex: none; height: 47px; }
.wallpaper { position: absolute; inset: 0; overflow: hidden; background: linear-gradient(90deg, #6c7d41 0, #938843 50px, #938b43 100px, #8d9249 150px, #8d944a 220px, #7d9a56 265px, #a49647 310px, #a49848 366px, #8a8144 1070px, #75935d 1110px, #61926e 1160px, #5a8b66 1210px, #478c42 1290px, #4b8a45 1395px, #938f4c 1430px); border-top: 1px solid #414322; }
.wallpaper::after { content: ""; position: absolute; inset: 0; background: linear-gradient(#2d2c1980, transparent 80%); }
.wallpaper svg { filter: blur(6px); opacity: .8; }
.dock { position: absolute; left: 366px; top: 0; width: 708px; height: 47px; display: flex; padding-left: 3px; border-radius: 5px 5px 0 0; background: linear-gradient(90deg, #a6a258 0, #a2a45c 60px, #84ac78 145px, #65a777 200px, #66a77a 260px, #8bab73 330px, #75a873 400px, #a2a966 470px, #a9a365 560px, #8da76d 620px, #59a876 708px); box-shadow: 0 -1px 14px #0003; }
.app { position: relative; flex: none; width: 38px; height: 44px; display: flex; align-items: center; justify-content: center; }
.run::after { content: ""; position: absolute; left: 17px; top: 41px; width: 4px; height: 4px; border-radius: 50%; background: #1a2b10; }
.badge { position: absolute; left: 24px; top: 4px; width: 13px; height: 13px; border-radius: 50%; background: #f3161d; color: #fff; font: 9px/13px "Liberation Sans", sans-serif; text-align: center; }
.word { font: bold 15px "Liberation Sans", sans-serif; fill: #fff; }
.rule { width: 1px; height: 35px; margin: 6px 8px 0 9px; background: #74763f; }
.mini { position: absolute; left: 23px; top: 26px; }
.code { top: 27px; }
.tip { position: absolute; left: 3px; top: 32px; width: 33px; height: 8px; border-radius: 4px; background: #476044; color: #fff; font: 6.500px/8px Inter, sans-serif; text-align: center; white-space: nowrap; }
```
